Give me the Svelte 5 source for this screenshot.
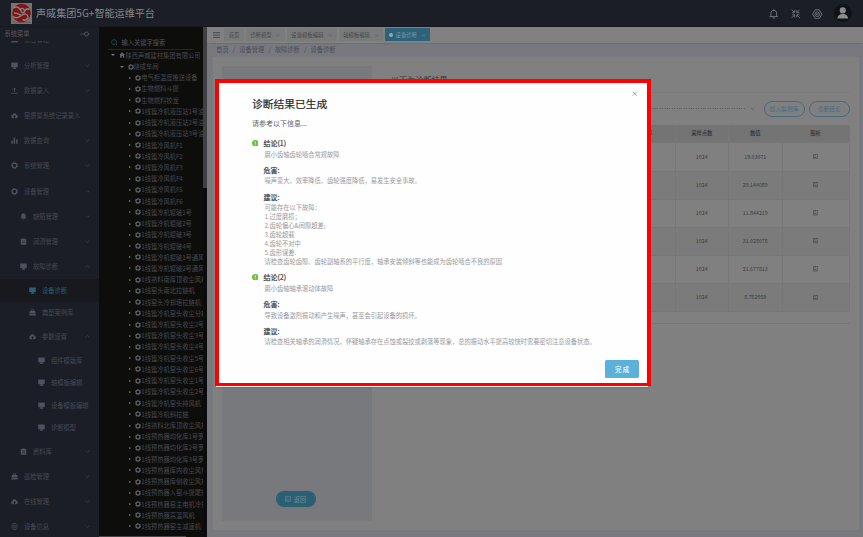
<script>
  const menu = [
    { t: '综合管理', i: 'case', l: 0, c: 'down' },
    { t: '分析管理', i: 'screen', l: 0, c: 'down' },
    { t: '数据录入', i: 'upload', l: 0, c: 'down' },
    { t: '窑质量系统记录录入', i: 'cloud', l: 0 },
    { t: '数据查询', i: 'bars', l: 0, c: 'down' },
    { t: '系统管理', i: 'gear', l: 0, c: 'down' },
    { t: '设备管理', i: 'gear', l: 0, c: 'up' },
    { t: '缺陷管理', i: 'bell', l: 1, c: 'down' },
    { t: '润滑管理', i: 'clip', l: 1, c: 'down' },
    { t: '故障诊断', i: 'screen', l: 1, c: 'up' },
    { t: '设备诊断', i: 'screen', l: 2, leaf: true, active: true },
    { t: '典型案例库', i: 'case', l: 2, leaf: true },
    { t: '参数设置', i: 'cloud', l: 2, c: 'up' },
    { t: '组件模版库', i: 'screen', l: 3, leaf: true },
    { t: '轴模板编辑', i: 'screen', l: 3, leaf: true },
    { t: '设备模板编辑', i: 'screen', l: 3, leaf: true },
    { t: '诊断模型', i: 'screen', l: 3, leaf: true },
    { t: '资料库', i: 'clip', l: 1, c: 'down' },
    { t: '巡检管理', i: 'case', l: 0, c: 'down' },
    { t: '在线管理', i: 'cloud', l: 0, c: 'down' },
    { t: '设备信息', i: 'hex', l: 0, c: 'down' }
  ];
  const tree = [
    '电气柜温度推送设备', '生物燃料斗提', '生物燃料铰龙',
    '1线篦冷机液压站1号油', '1线篦冷机液压站2号油', '1线篦冷机液压站3号油',
    '1线篦冷风机F1', '1线篦冷风机F2', '1线篦冷风机F3', '1线篦冷风机F4', '1线篦冷风机F5', '1线篦冷风机F6',
    '1线篦冷机辊破1号', '1线篦冷机辊破2号', '1线篦冷机辊破3号', '1线篦冷机辊破4号',
    '1线篦冷机辊破1号通风', '1线篦冷机辊破2号通风',
    '1线熟料南库顶收尘风机', '1线窑头南北拉链机', '1线窑头冷却塔拉链机',
    '1线篦冷机窑头收尘分格', '1线篦冷机窑头收尘2号', '1线篦冷机窑头收尘3号', '1线篦冷机窑头收尘4号',
    '1线篦冷机窑头收尘5号', '1线篦冷机窑头收尘6号', '1线篦冷机窑头收尘1号', '1线篦冷机窑头收尘2号',
    '1线篦冷机窑头排风机', '1线篦冷机斜拉链', '1线熟料北库顶收尘风机',
    '1线预热器均化库1号罗', '1线预热器均化库2号罗', '1线预热器均化库3号罗',
    '1线预热器库内收尘风机', '1线预热器库侧收尘风机', '1线预热器入窑斗提尾轮',
    '1线预热器窑主电机冷却', '1线预热器高温风机', '1线预热器窑主减速机'
  ];
  const tabs = ['首页', '诊断模型', '设备模板编辑', '轴模板编辑', '设备诊断'];
  const widths = [20, 38.5, 50, 44, 44.5];
  const values = ['19.03071', '29.144089', '11.844219', '31.028078', '21.677813', '8.762959'];
  const results = [
    {
      name: '磨小齿轴齿轮啮合常规故障',
      harm: '噪声变大、效率降低、齿轮强度降低，易发生安全事故。',
      tips: ['可能存在以下故障：', '1.过度磨损；', '2.齿轮偏心&间隙超差;', '3.齿轮超载', '4.齿轮不对中', '5.齿形误差.', '请检查齿轮齿隙、齿轮副轴系的平行度，轴承安装倾斜等也能成为齿轮啮合不良的原因']
    },
    {
      name: '磨小齿轴轴承滚动体故障',
      harm: '导致设备激烈振动和产生噪声，甚至会引起设备的损坏。',
      tips: ['请检查相关轴承的润滑情况，怀疑轴承存在点蚀或裂纹或剥落等现象，总的振动水平提高较快时需要密切注意设备状态。']
    }
  ];
</script>

{#snippet icon(name)}
  <svg class="ico" viewBox="0 0 14 14">
    {#if name === 'screen'}
      <path d="M.5 1h13v9.500H.5zM5 10.500h4V12h1.500v1.300h-7V12H5z" fill="currentColor" />
    {:else if name === 'upload'}
      <path d="M7 10V2M3.500 5.500L7 2l3.500 3.500M.5 12.500h13" fill="none" stroke="currentColor" stroke-width="1.500" />
    {:else if name === 'cloud'}
      <path d="M4 12.500a3.700 3.700 0 0 1-1-7.200 4.200 4.200 0 0 1 8 0A3.700 3.700 0 0 1 10.500 12.500H8V9.500h2L7 6 4 9.500h2v3z" fill="currentColor" />
    {:else if name === 'bars'}
      <path d="M.5 7h3v6.500h-3zM5.300 1h3v12.500h-3zM10.300 4.500h3v9h-3z" fill="currentColor" />
    {:else if name === 'gear'}
      <circle cx="7" cy="7" r="4.600" fill="none" stroke="currentColor" stroke-width="2.500" />
      <circle cx="7" cy="7" r="6.200" fill="none" stroke="currentColor" stroke-width="1.500" stroke-dasharray="3.250 3.243" />
    {:else if name === 'bell'}
      <path d="M7 .5c3 .5 4.300 2.500 4.300 5V9L13 11H1l1.700-2V5.500C2.700 3 4 1 7 .5zM5.300 11.800h3.400L7 13.500z" fill="currentColor" />
    {:else if name === 'clip'}
      <path fill-rule="evenodd" d="M1.500 2h3V.8h5V2h3v11.500h-11zM4 5.500v1.200h6V5.500zM4 8.800V10h6V8.800z" fill="currentColor" />
    {:else if name === 'case'}
      <path fill-rule="evenodd" d="M4 1.200h6V4h2.200l1 4.200H.8L1.800 4H4zM5.300 2.500V4h3.400V2.500zM.5 9.200h13v4H.5z" fill="currentColor" />
    {:else if name === 'hex'}
      <path d="M4.500 1h5l1.300 2.200L13.300 7l-2.500 3.800L9.500 13h-5l-1.300-2.200L.7 7l2.500-3.800z" fill="none" stroke="currentColor" stroke-width="1.300" />
      <circle cx="7" cy="7" r="3.200" fill="none" stroke="currentColor" />
      <circle cx="7" cy="7" r="1.200" fill="none" stroke="currentColor" />
    {:else if name === 'pic'}
      <path d="M1 1.500h12v11H1zM1.500 10.500l3.500-2.500 3 1.500 4-4M3.500 4.500h3" fill="none" stroke="currentColor" stroke-width="1.400" />
    {/if}
  </svg>
{/snippet}

{#snippet chev(dir)}
  <svg class="chev" viewBox="0 0 10 10"><path d={dir === 'up' ? 'M1 7l4-4 4 4' : 'M1 3l4 4 4-4'} fill="none" stroke="currentColor" stroke-width="1.500" /></svg>
{/snippet}

<div class="app">
  <header>
    <svg class="logo" viewBox="0 0 42 42">
      <rect width="42" height="42" fill="#77716f" />
      <circle cx="21" cy="20" r="18.500" fill="#7c1418" />
      <path d="M5 10c7-5 12 0 15 6s8 3 7-1-5-5-8-3M4 27c6 5 12 2 17-2s12-4 13 2-6 9-11 6M22 25c-5-1-9-6-16-5M28 15c3-4 6-4 9-2" fill="none" stroke="#8b8180" stroke-width="3" />
      <path d="M3 38.500h36" stroke="#5d4a49" stroke-width="2" stroke-dasharray="2 1" />
    </svg>
    <h1>声威集团5G+智能运维平台</h1>
    <div class="tools">
      <svg viewBox="0 0 14 14"><path d="M7 .5v1.500M2.800 11V6.500C2.800 3.500 4.500 2 7 2s4.200 1.500 4.200 4.500V11M.8 11.200h12.400M5.500 13.300h3" fill="none" stroke="currentColor" stroke-width="1.300" /></svg>
      <svg viewBox="0 0 14 14"><path d="M1 1l4 4M13 1L9 5M1 13l4-4M13 13L9 9M5.500 1.500v4h-4M8.500 1.500v4h4M5.500 12.500v-4h-4M8.500 12.500v-4h4" fill="none" stroke="currentColor" stroke-width="1.200" /></svg>
      <svg class="cog" viewBox="0 0 14 14"><path d="M4.500 1h5l1.300 2.200L13.300 7l-2.500 3.800L9.500 13h-5l-1.300-2.200L.7 7l2.500-3.800z" fill="none" stroke="currentColor" stroke-width="1.200" /><circle cx="7" cy="7" r="3.200" fill="none" stroke="currentColor" stroke-width="1.100" /><circle cx="7" cy="7" r="1.100" fill="none" stroke="currentColor" /></svg>
      <div class="avatar">
        <svg viewBox="0 0 12 12"><circle cx="6" cy="3.300" r="3.200" fill="#8b8b8b" /><path d="M.3 11.700C.5 8.700 3 7.300 4.300 7h3.400c1.300.3 3.800 1.700 4 4.700z" fill="#8b8b8b" /></svg>
      </div>
    </div>
  </header>

  <div class="body">
    <nav>
      <div class="navhead">
        <span>系统菜单</span>
        <svg viewBox="0 0 20 12"><path d="M1 6h8" stroke="currentColor" stroke-width="1.700" /><circle cx="13" cy="6" r="4" fill="none" stroke="currentColor" stroke-width="1.700" /><path d="M17 6h2" stroke="currentColor" stroke-width="1.700" /></svg>
      </div>
      <div class="navlist">
        <div class="navinner">
          {#each menu as m}
            <div class="item l{m.l}" class:leaf={m.leaf} class:active={m.active}>
              {@render icon(m.i)}
              <span>{m.t}</span>
              {#if m.c}{@render chev(m.c)}{/if}
            </div>
          {/each}
        </div>
      </div>
    </nav>

    <aside>
      <div class="treecol">
        <div class="search">
          <svg viewBox="0 0 12 12"><circle cx="5.700" cy="5.700" r="4.600" fill="none" stroke="#1f5870" stroke-width="1.300" /><path d="M9 9l2.500 2.500" stroke="#1f5870" stroke-width="1.300" /></svg>
          <span>输入关键字搜索</span>
        </div>
        <div class="node root">
          <i class="open"></i>
          <svg class="home" viewBox="0 0 12 12"><path d="M6 .5L.3 6h1.500v5.500h3V8h2.400v3.500h3V6h1.500z" fill="currentColor" /></svg>
          <span>陕西声威建材集团有限公司</span>
        </div>
        <div class="node shop"><i class="open"></i>{@render icon('gear')}<span>烧成车间</span></div>
        {#each tree as t}
          <div class="node"><i></i>{@render icon('gear')}<span>{t}</span></div>
        {/each}
      </div>
      <div class="track"><div class="thumb"></div></div>
      <div class="hbar"></div>
    </aside>

    <main>
      <div class="tabs">
        <svg class="burger" viewBox="0 0 14 12"><path d="M0 1.200h14M0 6h14M0 10.800h14" stroke="#3c4257" stroke-width="1.800" /></svg>
        {#each tabs as t, i}
          <div class="tab" class:on={i === 4} style="width:{widths[i]}px">
            {#if i === 4}<b></b>{/if}<span>{t}</span>{#if i > 0}<em>×</em>{/if}
          </div>
        {/each}
      </div>
      <div class="crumbs"><span>首页</span><u>/</u><span>设备管理</span><u>/</u><span>故障诊断</span><u>/</u><span>设备诊断</span></div>
      <div class="card">
        <div class="panel">
          <button class="back">{@render icon('pic')}<span>返回</span></button>
        </div>
        <section>
          <h2>以下为诊断结果</h2>
          <div class="bar">
            <div class="dots"></div>
            {@render chev('down')}
            <button>加入案例库</button>
            <button>诊断结论</button>
          </div>
          <div class="table">
            <div class="tr th"><div>测点</div><div>分析频率</div><div>采样点数</div><div>数值</div><div>图析</div></div>
            {#each values as v, i}
              <div class="tr" class:alt={i % 2}><div></div><div></div><div>1024</div><div>{v}</div><div>{@render icon('pic')}</div></div>
            {/each}
          </div>
          <div class="rule"></div>
        </section>
      </div>
    </main>
  </div>

  <div class="sheet"></div>
  <div class="dialog">
    <svg class="close" viewBox="0 0 8 8"><path d="M1 1l6 6M7 1L1 7" stroke="#85888e" stroke-width="1" /></svg>
    <h3>诊断结果已生成</h3>
    <p class="sub">请参考以下信息...</p>
    {#each results as r, i}
      <article>
        <h4><svg viewBox="0 0 14 14"><circle cx="7" cy="7" r="7" fill="#70bf45" /><path d="M7 3v5M7 9.500v1.700" stroke="#fff" stroke-width="1.500" /></svg>结论({i + 1})</h4>
        <p>{r.name}</p>
        <h5>危害:</h5>
        <p>{r.harm}</p>
        <h5>建议:</h5>
        {#each r.tips as line}<p class="tip">{line}</p>{/each}
      </article>
    {/each}
    <button class="done">完 成</button>
  </div>
</div>

<style>
  :global(body) { margin: 0; overflow: hidden; }
  .app { position: relative; width: 863px; height: 537px; overflow: hidden; font-family: "Noto Sans CJK SC", "Liberation Sans", sans-serif; font-size: 6.25px; background: #77797e; display: flex; flex-direction: column; white-space: nowrap; }
  .app * { box-sizing: border-box; }
  h1, h2, h3, h4, h5, p { margin: 0; font-weight: 400; }
  button { font: inherit; padding: 0; margin: 0; border: 0; }
  svg { display: block; flex: none; }
  .ico { width: 7px; height: 7px; }
  .chev { width: 5px; height: 5px; }

  header { height: 27px; flex: none; background: #1b1e27; display: flex; align-items: center; padding: 0 11px 0 11px; border-bottom: 1px solid #17191f; }
  .logo { width: 21px; height: 21px; }
  h1 { font-size: 10.080px; color: #85878b; margin-left: 4px; line-height: 20px; }
  .tools { margin-left: auto; display: flex; align-items: center; color: #7b7d82; }
  .tools > svg { width: 9.500px; height: 9.500px; margin-right: 12.500px; margin-top: 2px; }
  .tools > svg.cog { width: 10.500px; height: 10.500px; margin-left: -.5px; margin-right: 11.500px; }
  .avatar { width: 18px; height: 18px; border-radius: 50%; background: #10121a; display: flex; align-items: center; justify-content: center; }
  .avatar svg { width: 11.500px; height: 12px; margin-bottom: 1px; }

  .body { flex: 1; display: flex; min-height: 0; }
  nav { width: 99px; flex: none; background: #1b1e26; color: #464955; display: flex; flex-direction: column; }
  .navhead { height: 13.500px; flex: none; display: flex; align-items: center; justify-content: space-between; padding: 0 9px 0 4.500px; color: #555862; }
  .navhead svg { width: 10px; height: 6px; }
  .navlist { flex: 1; overflow: hidden; min-height: 0; }
  .navinner { margin-top: -13.200px; }
  .item { height: 25.200px; display: flex; align-items: center; padding: 0 9px 0 10.800px; }
  .item .ico { color: #4f5160; }
  .item span { margin-left: 6.200px; flex: 1; }
  .item.leaf { height: 22.400px; }
  .item.l1 { padding-left: 19.800px; }
  .item.l2 { padding-left: 28.800px; }
  .item.l3 { padding-left: 37.800px; }
  .item .chev { color: #3a3e46; }
  .item.active { background: #17191e; color: #245d72; }
  .item.active .ico { color: #2b6076; }

  aside { width: 108px; flex: none; background: #0d0d0c; color: #48494e; display: flex; position: relative; }
  .treecol { width: 104px; overflow: hidden; padding-top: 8.500px; }
  .search { display: flex; align-items: center; height: 14px; margin: 0 9px 0 9px; padding-left: 3px; border-bottom: 1px solid #252525; color: #54565a; margin-bottom: .2px; }
  .search svg { width: 6.500px; height: 6.500px; margin-right: 4px; }
  .node { height: 11.230px; display: flex; align-items: center; padding-left: 30px; }
  .node i { width: 6.200px; flex: none; }
  .node i::before { content: ''; display: block; width: 0; border-left: 2px solid #75777b; border-top: 1.500px solid transparent; border-bottom: 1.500px solid transparent; }
  .node i.open::before { border-top: 2px solid #75777b; border-left: 2px solid transparent; border-right: 2px solid transparent; border-bottom: 0; }
  .node .ico { width: 6px; height: 6px; color: #686a71; margin-right: 0; }
  .node.root { padding-left: 12px; }
  .node.shop { padding-left: 20.500px; }
  .shop i, .root i { width: 8px; }
  .home { width: 6.300px; height: 6px; margin-right: .3px; color: #62646c; }
  .track { width: 4px; background: #0b0b0b; }
  .thumb { height: 161px; background: #404043; }
  .hbar { position: absolute; left: 0; bottom: 0; width: 87px; height: 1px; background: #45444a; }

  main { flex: 1; min-width: 0; background: #77797e; display: flex; flex-direction: column; }
  .tabs { height: 16px; flex: none; background: #818181; display: flex; align-items: center; padding-left: 6px; box-shadow: 0 .5px 1px #6c6e72; }
  .burger { width: 7px; height: 6px; margin-right: 4px; }
  .tab { height: 13px; background: #797a7b; color: #44464a; display: flex; align-items: center; justify-content: center; font-size: 5.350px; margin-right: 2.200px; flex: none; margin-top: -1px; }
  .tab em { font-style: normal; margin-left: 4px; color: #5b5d61; font-size: 5px; }
  .tab.on { background: #2c637b; color: #7f97a2; }
  .tab.on b { width: 4px; height: 4px; border-radius: 50%; background: #9aa5aa; margin-right: 2.500px; }
  .tab.on em { color: #6c8792; }
  .crumbs { height: 14px; flex: none; display: flex; align-items: center; padding: 0 0 2px 9.200px; color: #4a4d59; }
  .crumbs u { text-decoration: none; width: 10.600px; text-align: center; }
  .card { height: 472.500px; margin: 0 4px 0 5.500px; background: #808080; display: flex; padding: 9px 9.500px 9px 9px; }
  .panel { width: 150px; flex: none; background: #77797c; display: flex; align-items: flex-end; justify-content: center; padding-bottom: 13.500px; }
  .back { width: 40px; height: 16px; border-radius: 8px; background: #2b5f74; color: #6e8c98; display: flex; align-items: center; justify-content: center; gap: 2.500px; margin-right: 1.500px; }
  .back .ico { width: 6px; height: 6px; }
  section { flex: 1; min-width: 0; padding-left: 19.500px; }
  h2 { font-size: 8.100px; line-height: 12px; padding-top: 8px; height: 26.500px; color: #37393c; border-bottom: 1px solid #7a7a7b; }
  .bar { height: 32.300px; display: flex; align-items: center; }
  .dots { flex: 1; height: 1px; background: repeating-linear-gradient(90deg, #5e6063 0 1px, #7b7b7b 1px 2.400px); }
  .bar .chev { margin: 0 8.500px 0 5.500px; color: #456b80; }
  .bar button { width: 41px; height: 16px; border-radius: 8px; border: 1px solid #466c80; background: transparent; color: #446b80; font-size: 5.800px; line-height: 14px; }
  .bar button + button { margin-left: 4px; }
  .table { border-left: 1px solid #777; }
  .tr { display: flex; height: 28.150px; font-size: 5.300px; color: #3a3b3d; }
  .tr.th { height: 18.700px; background: #747474; color: #323335; font-weight: 500; }
  .tr.alt { background: #7b7b7b; }
  .tr > div { border-right: 1px solid #777; border-bottom: 1px solid #777; display: flex; align-items: center; justify-content: center; width: 53.500px; flex: none; padding-bottom: .8px; }
  .tr > div:nth-child(1) { flex: 1; }
  .tr > div:nth-child(2) { width: 67px; }
  .tr > div:nth-child(5) { width: 67px; }
  .tr .ico { width: 5.500px; height: 5.500px; }
  .rule { height: 12px; border-bottom: 1px solid #767676; }

  .sheet { position: absolute; left: 216px; top: 384px; width: 432px; height: 3px; background: #f4f4f4; box-shadow: 0 1px 1px #66666688; }
  .dialog { position: absolute; left: 215px; top: 79px; width: 436px; height: 307px; border: 4px solid #fe0000; border-bottom-width: 3px; background: #fefefe; padding: 13px 0 0 33px; }
  .close { position: absolute; right: 9.500px; top: 8px; width: 5.500px; height: 5.500px; }
  h3 { font-size: 10.750px; line-height: 16px; color: #28292c; -webkit-text-stroke: .2px #28292c; }
  .sub { font-size: 7px; line-height: 10px; color: #5e6064; margin-top: 5.800px; }
  article { padding-left: 11.500px; margin-top: 10.300px; }
  article + article { margin-top: 5.800px; }
  h4, h5 { font-size: 7px; line-height: 10px; color: #36383b; font-weight: 400; -webkit-text-stroke: .2px #36383b; }
  h4 { display: flex; align-items: center; }
  h4 svg { width: 6.600px; height: 6.600px; margin: 0 5.200px 0 -11.800px; }
  h5 { margin-top: 6.200px; }
  article p { font-size: 6.260px; line-height: 9px; margin-top: 1.600px; padding-left: .9px; color: #97999d; }
  article .tip + .tip { margin-top: 0; }
  article h5 + .tip { margin-top: 1.700px; }
  .done { position: absolute; right: 8px; bottom: 5px; width: 34px; height: 18px; border-radius: 1.500px; background: #5cb1db; color: #fff; font-size: 6.400px; font-weight: 500; }
</style>
